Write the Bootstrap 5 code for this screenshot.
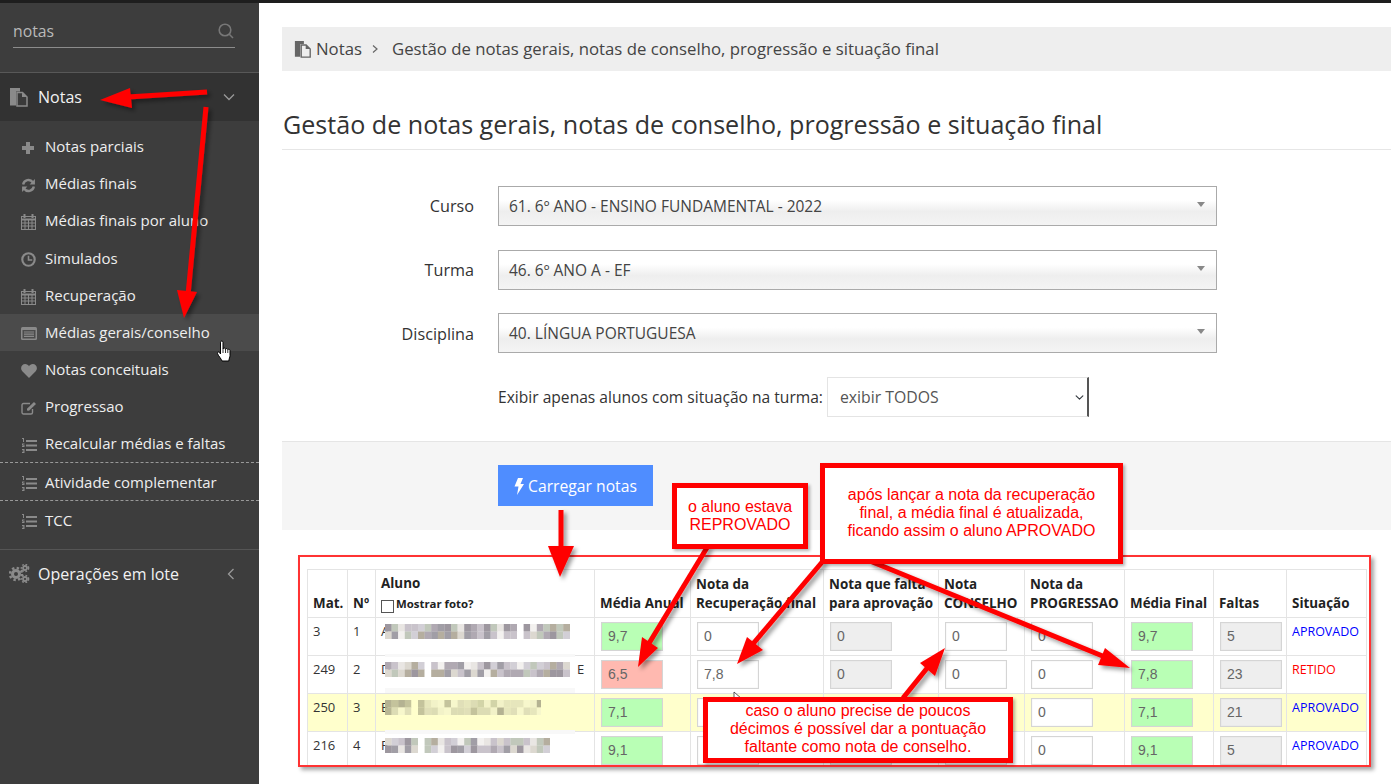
<!DOCTYPE html>
<html lang="pt-BR">
<head>
<meta charset="utf-8">
<title>Notas</title>
<link href="https://cdn.jsdelivr.net/npm/bootstrap@5.3.0/dist/css/bootstrap.min.css" rel="stylesheet">
<style>
html,body{height:784px;overflow:hidden}
body{font-family:"Open Sans",sans-serif;color:#333;background:#fff;position:relative}
.topstrip{height:3px;background:#1e1e1e}
.shell{height:781px}
.side{width:259px;flex:none;background:#3d3d3d;color:#eee;font-size:15px}
.sidesearch{height:70px;padding:16px 24px 0 13px;border-bottom:1px solid #585858}
.sidesearch-in{height:29px;border-bottom:1px solid #8c8c8c;color:#b9b9b9;font-size:15.8px;line-height:24px}
.sidesearch-in svg{margin-top:3px}
.sidegroup{height:48px;padding:0 24px 0 9px;font-size:16px;color:#f2f2f2}
.sidegroup.open{background:#323232}
.sidegroup.last{height:47px}
.sidegroup .gi{width:29px}
.sublist{padding:6.6px 0 10.400px;border-bottom:1px solid #555;margin:0;list-style:none}
.subitem{height:37.2px;padding-left:21px;color:#eee;white-space:nowrap}
.subitem .si{width:24px;flex:none}
.subitem.hov{background:#4b4b4b}
.subitem.dash{border-top:1px dashed #999;height:38.2px}
.mainarea{min-width:0;padding-left:23px}
.crumbbar{margin:24px 0 0;height:44px;background:#eee;padding:0 12px;font-size:16.75px;color:#444}
.pagehead{font-size:25.1px;font-weight:400;color:#333;margin:0;height:79px;padding:36px 0 0 1px;line-height:34px;border-bottom:1px solid #e6e6e6}
.formzone{padding:36px 0 0;height:291px}
.frow{margin-bottom:23.7px;height:40px}
.flabel{width:216px;text-align:right;padding:1px 24px 0 0;font-size:16.2px;color:#333}
.sel2{width:719px;height:40px;border:1px solid #aaa;background:linear-gradient(#fff 35%,#eee 65%,#f4f4f4);padding:0 10px;font-size:15.5px;color:#444;line-height:39px;position:relative}
.sel2 i{position:absolute;right:11px;top:15px;border:4px solid transparent;border-top:5px solid #888;border-bottom:0}
.filtrow{padding-left:216px;height:40px;font-size:15.6px;color:#333}
.filtrow span{padding-top:1px}
.filtsel{width:262px;height:40px;margin-left:4px;border:1px solid #e4e4e4;border-right:2px solid #555;border-radius:0;font-family:"Open Sans",sans-serif;font-size:15.8px;color:#555;padding:2px 0 0 12px;background-position:right 2px center;background-size:11px 9px}
.actionbar{height:89px;background:#f5f5f5;border-top:1px solid #e5e5e5;padding:23px 0 0 216px}
.loadbtn{width:155px;height:41px;background:#4f8dff;border:0;border-radius:0;color:#fff;font-size:15.7px;padding:2px 0 0}
.gradeframe{margin:25px 20px 0 16px;height:212px;border:2px solid #f33;padding:12px 3px 0 7px;overflow:hidden;box-shadow:3px 3px 4px rgba(0,0,0,.35)}
.gradetable{table-layout:fixed;width:1059px;margin:0;border-collapse:collapse;font-size:13px;color:#333}
.gradetable th,.gradetable td{border:1px solid #e4e4e4;padding:6px 5px;box-shadow:none;background:transparent}
.gradetable thead th{vertical-align:bottom;font-weight:700;font-size:13.4px;line-height:19px;color:#222;padding:4px 5px 4px;white-space:nowrap;height:47px}
.gradetable tbody td{height:38px;padding:4px 5px;vertical-align:top;line-height:19px}
.gradetable tbody tr.alert-row td{background:#ffc}
.photoline{font-size:11.4px;display:flex;align-items:flex-start;line-height:12px;margin-top:5px;height:15px}
.photobox{width:13px;height:13px;border:1.5px solid #555;display:inline-block;margin:2px 2px 0 0;background:#fff}
.notefield{display:block;height:29px;width:62px;margin:0 0 0 1px;padding:0 6px;border:1px solid #d5d5d5;box-shadow:inset 0 0 1px #ccc;font:14px/27px "Liberation Sans",sans-serif;color:#666;background:#fff;border-radius:0}
.notefield.okfield{background:#b9ffb5}
.notefield.badfield{background:#ffb9b0}
.notefield.offfield{background:#eee;border-width:1.5px}
.namecell{display:flex;align-items:flex-start;white-space:nowrap}
.namecell b{font-weight:400;width:4px;flex:none}
.namecell svg{margin-top:2px;flex:none;filter:blur(.45px)}
.namecell span{margin-left:4px}
.stat-ok{color:#00f;font-size:12.5px}
.stat-no{color:#f00;font-size:12.5px}
.arrowlayer{position:absolute;left:0;top:0;width:1391px;height:784px;pointer-events:none}
.callout{position:absolute;background:#fff;border:5px solid #f00;color:#f00;font-family:"Liberation Sans",sans-serif;font-size:16px;line-height:18px;text-align:center;box-shadow:2px 2px 3px rgba(0,0,0,.3);display:flex;align-items:center;justify-content:center}
.call-a{left:672px;top:483px;width:136px;height:66px}
.call-b{left:820px;top:463px;width:303px;height:101px;padding-bottom:2px}
.call-c{left:703px;top:697px;width:310px;height:66px;padding-bottom:3px}
.handcursor{position:absolute;left:216px;top:340px;width:18px;height:24px}
</style>
</head>
<body>
<div class="topstrip"></div>
<div class="shell d-flex">
  <aside class="side">
    <div class="sidesearch">
      <div class="sidesearch-in d-flex justify-content-between">
        <span>notas</span>
        <svg width="18" height="18" viewBox="0 0 18 18" fill="none" stroke="#777" stroke-width="1.6"><circle cx="8" cy="8" r="5.8"/><path d="M12.3 12.3 16 16"/></svg>
      </div>
    </div>
    <div class="sidegroup open d-flex align-items-center">
      <span class="gi d-flex"><svg width="20" height="20" viewBox="0 0 20 20"><path d="M1 1h10v3.5H7v14H1z" fill="#8a8a8a"/><path d="M8 5.500h5.500l4.500 4.500v9H8z" fill="#3a3a3a" stroke="#8a8a8a" stroke-width="1.500"/><path d="M13 5.500V10h5z" fill="#8a8a8a"/></svg></span>
      <span class="flex-grow-1">Notas</span>
      <svg width="12" height="8" viewBox="0 0 12 8" fill="none" stroke="#999" stroke-width="1.300"><path d="M1 1.500l5 5 5-5"/></svg>
    </div>
    <ul class="sublist">
      <li class="subitem d-flex align-items-center"><span class="si"><svg width="14" height="14" viewBox="0 0 14 14"><path d="M5 1h4v4h4v4H9v4H5V9H1V5h4z" fill="#8a8a8a"/></svg></span>Notas parciais</li>
      <li class="subitem d-flex align-items-center"><span class="si"><svg width="15" height="15" viewBox="0 0 14 14" fill="none" stroke="#8a8a8a" stroke-width="2.200"><path d="M2 6a5 5 0 0 1 9-2"/><path d="M12 8a5 5 0 0 1-9 2"/><path d="M13 1v5H8zM1 13V8h5z" fill="#8a8a8a" stroke="none"/></svg></span>Médias finais</li>
      <li class="subitem d-flex align-items-center"><span class="si"><svg width="15" height="16" viewBox="0 0 15 16" fill="none" stroke="#8a8a8a"><rect x=".5" y="2.500" width="14" height="13"/><path d="M.5 5.500h14" stroke-width="2"/><path d="M.5 9h14M.5 12h14M4 5v10M7.500 5v10M11 5v10"/><path d="M3.500 0v4M11.500 0v4" stroke-width="2"/></svg></span>Médias finais por aluno</li>
      <li class="subitem d-flex align-items-center"><span class="si"><svg width="15" height="15" viewBox="0 0 14 14" fill="none" stroke="#8a8a8a" stroke-width="2"><circle cx="7" cy="7" r="5.800"/><path d="M7 3.500V7.500H10.500" stroke-width="1.500"/></svg></span>Simulados</li>
      <li class="subitem d-flex align-items-center"><span class="si"><svg width="15" height="16" viewBox="0 0 15 16" fill="none" stroke="#8a8a8a"><rect x=".5" y="2.500" width="14" height="13"/><path d="M.5 5.500h14" stroke-width="2"/><path d="M.5 9h14M.5 12h14M4 5v10M7.500 5v10M11 5v10"/><path d="M3.500 0v4M11.500 0v4" stroke-width="2"/></svg></span>Recuperação</li>
      <li class="subitem hov d-flex align-items-center"><span class="si"><svg width="16" height="13" viewBox="0 0 16 13"><rect width="16" height="13" rx="1.500" fill="#8a8a8a"/><rect x="1.500" y="3" width="13" height="8.500" fill="#4b4b4b"/><path d="M3 5h10M3 7.200h10M3 9.400h10" stroke="#8a8a8a" stroke-width="1.200"/></svg></span>Médias gerais/conselho</li>
      <li class="subitem d-flex align-items-center"><span class="si"><svg width="16" height="14" viewBox="0 0 16 14"><path d="M8 14 1.300 7.300C-1.500 3.800 1 0 4.200 0 6 0 7.200 1 8 2.200 8.800 1 10 0 11.800 0 15 0 17.500 3.800 14.700 7.300z" fill="#8a8a8a"/></svg></span>Notas conceituais</li>
      <li class="subitem d-flex align-items-center"><span class="si"><svg width="16" height="14" viewBox="0 0 16 14" fill="none" stroke="#8a8a8a" stroke-width="1.400"><path d="M11.500 8v3.500a1.500 1.500 0 0 1-1.500 1.500H2.500A1.500 1.500 0 0 1 1 11.500V4a1.500 1.500 0 0 1 1.500-1.500H9"/><path d="M6 9.500V7.800L13 1l2 2-7 6.800z" fill="#8a8a8a" stroke="none"/></svg></span>Progressao</li>
      <li class="subitem d-flex align-items-center"><span class="si"><svg width="16" height="15" viewBox="0 0 16 15" fill="#8a8a8a"><path d="M5 2h11v2H5zM5 6.500h11v2H5zM5 11h11v2H5z"/><path d="M1 0h2v4H2V1H1zM1 5.500h2.500v1H2v.5h1.500V9H1v-1h1.500v-.5H1zM1 11h2.500v4H1v-1h1.500v-.5H1.500v-1h1V12H1z"/></svg></span>Recalcular médias e faltas</li>
      <li class="subitem dash d-flex align-items-center"><span class="si"><svg width="16" height="15" viewBox="0 0 16 15" fill="#8a8a8a"><path d="M5 2h11v2H5zM5 6.500h11v2H5zM5 11h11v2H5z"/><path d="M1 0h2v4H2V1H1zM1 5.500h2.500v1H2v.5h1.500V9H1v-1h1.500v-.5H1zM1 11h2.500v4H1v-1h1.500v-.5H1.500v-1h1V12H1z"/></svg></span>Atividade complementar</li>
      <li class="subitem dash d-flex align-items-center"><span class="si"><svg width="16" height="15" viewBox="0 0 16 15" fill="#8a8a8a"><path d="M5 2h11v2H5zM5 6.500h11v2H5zM5 11h11v2H5z"/><path d="M1 0h2v4H2V1H1zM1 5.500h2.500v1H2v.5h1.500V9H1v-1h1.500v-.5H1zM1 11h2.500v4H1v-1h1.500v-.5H1.500v-1h1V12H1z"/></svg></span>TCC</li>
    </ul>
    <div class="sidegroup last d-flex align-items-center">
      <span class="gi d-flex"><svg width="21" height="19" viewBox="0 0 21 19" fill="none" stroke="#8a8a8a"><circle cx="7" cy="10" r="3.500" stroke-width="3"/><circle cx="7" cy="10" r="6" stroke-width="2.500" stroke-dasharray="2.400 2.300"/><circle cx="16" cy="4" r="2" stroke-width="1.800"/><circle cx="16" cy="4" r="3.600" stroke-width="1.500" stroke-dasharray="1.700 1.700"/><circle cx="16" cy="15" r="2" stroke-width="1.800"/><circle cx="16" cy="15" r="3.600" stroke-width="1.500" stroke-dasharray="1.700 1.700"/></svg></span>
      <span class="flex-grow-1">Operações em lote</span>
      <svg width="8" height="12" viewBox="0 0 8 12" fill="none" stroke="#999" stroke-width="1.300"><path d="M6.500 1l-5 5 5 5"/></svg>
    </div>
  </aside>
  <main class="mainarea flex-grow-1">
    <nav class="crumbbar d-flex align-items-center">
      <svg class="me-1" width="18" height="18" viewBox="0 0 20 20"><path d="M1 1h10v3.500H7v14H1z" fill="#666"/><path d="M8 5.500h5.500l4.500 4.500v9H8z" fill="#eee" stroke="#666" stroke-width="1.500"/><path d="M13 5.500V10h5z" fill="#666"/></svg>
      <span>Notas</span>
      <svg class="mx-2" width="10" height="10" viewBox="0 0 10 10" fill="none" stroke="#666" stroke-width="1.200"><path d="M3 1.500 7 5 3 8.500"/></svg>
      <span class="ms-1">Gestão de notas gerais, notas de conselho, progressão e situação final</span>
    </nav>
    <h1 class="pagehead">Gestão de notas gerais, notas de conselho, progressão e situação final</h1>
    <form class="formzone">
      <div class="frow d-flex align-items-center"><label class="flabel">Curso</label><div class="sel2">61. 6º ANO - ENSINO FUNDAMENTAL - 2022<i></i></div></div>
      <div class="frow d-flex align-items-center"><label class="flabel">Turma</label><div class="sel2">46. 6º ANO A - EF<i></i></div></div>
      <div class="frow d-flex align-items-center"><label class="flabel">Disciplina</label><div class="sel2">40. LÍNGUA PORTUGUESA<i></i></div></div>
      <div class="filtrow d-flex align-items-center"><span>Exibir apenas alunos com situação na turma:</span>
        <select class="form-select filtsel"><option>exibir TODOS</option></select>
      </div>
    </form>
    <div class="actionbar">
      <button type="button" class="btn loadbtn d-inline-flex align-items-center justify-content-center gap-1">
        <svg width="10" height="17" viewBox="0 0 10 17"><path d="M4 0h5L6.500 6H10L3 17l1.500-8.500H.5z" fill="#fff"/></svg>Carregar notas
      </button>
    </div>
    <div class="gradeframe">
      <table class="table gradetable">
        <colgroup><col style="width:40px"><col style="width:28px"><col style="width:219px"><col style="width:96px"><col style="width:133px"><col style="width:115px"><col style="width:86px"><col style="width:100px"><col style="width:89px"><col style="width:73px"><col style="width:80px"></colgroup>
        <thead><tr>
          <th>Mat.</th><th>Nº</th>
          <th>Aluno<div class="photoline"><span class="photobox"></span>Mostrar foto?</div></th>
          <th>Média Anual</th><th>Nota da<br>Recuperação final</th><th>Nota que falta<br>para aprovação</th><th>Nota<br>CONSELHO</th><th>Nota da<br>PROGRESSAO</th><th>Média Final</th><th>Faltas</th><th>Situação</th>
        </tr></thead>
        <tbody>
          <tr><td>3</td><td>1</td><td><div class="namecell" data-w="188" data-s="31" data-g="20" data-t=""><b>A</b></div></td><td><span class="notefield okfield">9,7</span></td><td><span class="notefield">0</span></td><td><span class="notefield offfield">0</span></td><td><span class="notefield">0</span></td><td><span class="notefield">0</span></td><td><span class="notefield okfield">9,7</span></td><td><span class="notefield offfield">5</span></td><td class="stat-ok">APROVADO</td></tr>
          <tr><td>249</td><td>2</td><td><div class="namecell" data-w="188" data-s="77" data-g="6" data-t="E"><b>D</b></div></td><td><span class="notefield badfield">6,5</span></td><td><span class="notefield">7,8</span></td><td><span class="notefield offfield">0</span></td><td><span class="notefield">0</span></td><td><span class="notefield">0</span></td><td><span class="notefield okfield">7,8</span></td><td><span class="notefield offfield">23</span></td><td class="stat-no">RETIDO</td></tr>
          <tr class="alert-row"><td>250</td><td>3</td><td><div class="namecell" data-w="156" data-s="113" data-g="4" data-t=""><b>E</b></div></td><td><span class="notefield okfield">7,1</span></td><td><span class="notefield"></span></td><td><span class="notefield offfield"></span></td><td><span class="notefield"></span></td><td><span class="notefield">0</span></td><td><span class="notefield okfield">7,1</span></td><td><span class="notefield offfield">21</span></td><td class="stat-ok">APROVADO</td></tr>
          <tr><td>216</td><td>4</td><td><div class="namecell" data-w="165" data-s="171" data-g="5" data-t=""><b>F</b></div></td><td><span class="notefield okfield">9,1</span></td><td><span class="notefield"></span></td><td><span class="notefield offfield"></span></td><td><span class="notefield"></span></td><td><span class="notefield">0</span></td><td><span class="notefield okfield">9,1</span></td><td><span class="notefield offfield">5</span></td><td class="stat-ok">APROVADO</td></tr>
        </tbody>
      </table>
    </div>
  </main>
</div>

<svg class="arrowlayer" viewBox="0 0 1391 784" xmlns="http://www.w3.org/2000/svg">
  <defs><filter id="sh" x="-20%" y="-20%" width="140%" height="140%"><feDropShadow dx="3" dy="3" stdDeviation="2" flood-color="#000" flood-opacity=".4"/></filter></defs>
  <path d="M385 654h190v3H385zM385 688h190v5H385zM385 730h190v4H385z" fill="#f8f8f8"/>
  <path d="M734 692l0 11 3-2 3 2-1-4 3 0z" fill="#fff" stroke="#333" stroke-width=".8"/>
  <g filter="url(#sh)" fill="#f00" stroke="#f00" stroke-width="0">
    <path d="M207 92 128 97" stroke-width="5"/>
    <path d="M100 100 130 88 132 108z"/>
    <path d="M206 107 188 295" stroke-width="5"/>
    <path d="M184 318 177 290 197 292z"/>
    <path d="M561 510V550" stroke-width="5"/>
    <path d="M560 577 548 546 574 546z"/>
    <path d="M708 546 648 645" stroke-width="5"/>
    <path d="M638 667 642 637 658 648z"/>
    <path d="M823 561 752 645" stroke-width="5"/>
    <path d="M737 664 747 637 763 650z"/>
    <path d="M870 561 1105 657" stroke-width="5"/>
    <path d="M1130 668 1105 648 1098 665z"/>
    <path d="M903 698 928 667" stroke-width="5"/>
    <path d="M945 648 920 663 935 676z"/>
  </g>
</svg>
<div class="callout call-a"><span>o aluno estava<br>REPROVADO</span></div>
<div class="callout call-b"><span>após lançar a nota da recuperação<br>final, a média final é atualizada,<br>ficando assim o aluno APROVADO</span></div>
<div class="callout call-c"><span>caso o aluno precise de poucos<br>décimos é possível dar a pontuação<br>faltante como nota de conselho.</span></div>
<svg class="handcursor" viewBox="0 0 18 24" xmlns="http://www.w3.org/2000/svg"><path d="M4.500 2.200c0-1.600 2.500-1.600 2.500 0V9c.4-1.400 2.500-1.200 2.500.2.400-1 2.300-.8 2.300.5.500-.8 2.200-.5 2.200.8v5c0 2-1 3-1.200 5.500H6c-.5-2-4-5.500-4.500-7.500-.3-1.400 1.200-2 2-1l1 1.500z" fill="#fff" stroke="#000" stroke-width="1"/><path d="M7 9v4M9.500 9v4M11.800 10v3" stroke="#000" stroke-width=".8"/></svg>

<script>
document.querySelectorAll('.namecell').forEach(function(c){
  var w=+c.dataset.w,s=+c.dataset.s,gap=+c.dataset.g,t=c.dataset.t,cell=6.6,h=7.5;
  var ns='http://www.w3.org/2000/svg',svg=document.createElementNS(ns,'svg');
  var cols=Math.round(w/cell);
  svg.setAttribute('width',w);svg.setAttribute('height',15);
  var tones=['#c9c3cb','#b0a9b2','#dcd8d0','#a19ea6','#e9e6e3','#c1c8bb','#b5ae9f','#d2cfd6','#f3f1ef','#9d979f'];
  if(c.closest('.alert-row')) tones=['#dcdcb4','#c4c39c','#e6e6bc','#b8b795','#f2f2c8','#d2d4a8','#b4b292','#e0dfb8','#f7f7cc'];
  var blank=c.closest('.alert-row')?'#ffffcc':'#ffffff';
  for(var r=0;r<2;r++)for(var i=0;i<cols;i++){
    s=(s*75+74)%65537;
    var g=tones[(s>>3)%tones.length];
    if(i===gap) g=blank;
    var e=document.createElementNS(ns,'rect');
    e.setAttribute('x',i*cell);e.setAttribute('y',r*h);
    e.setAttribute('width',cell+.2);e.setAttribute('height',h+.2);e.setAttribute('fill',g);
    svg.appendChild(e);
  }
  c.appendChild(svg);
  if(t){var sp=document.createElement('span');sp.textContent=t;c.appendChild(sp);}
});
</script>
</body>
</html>
